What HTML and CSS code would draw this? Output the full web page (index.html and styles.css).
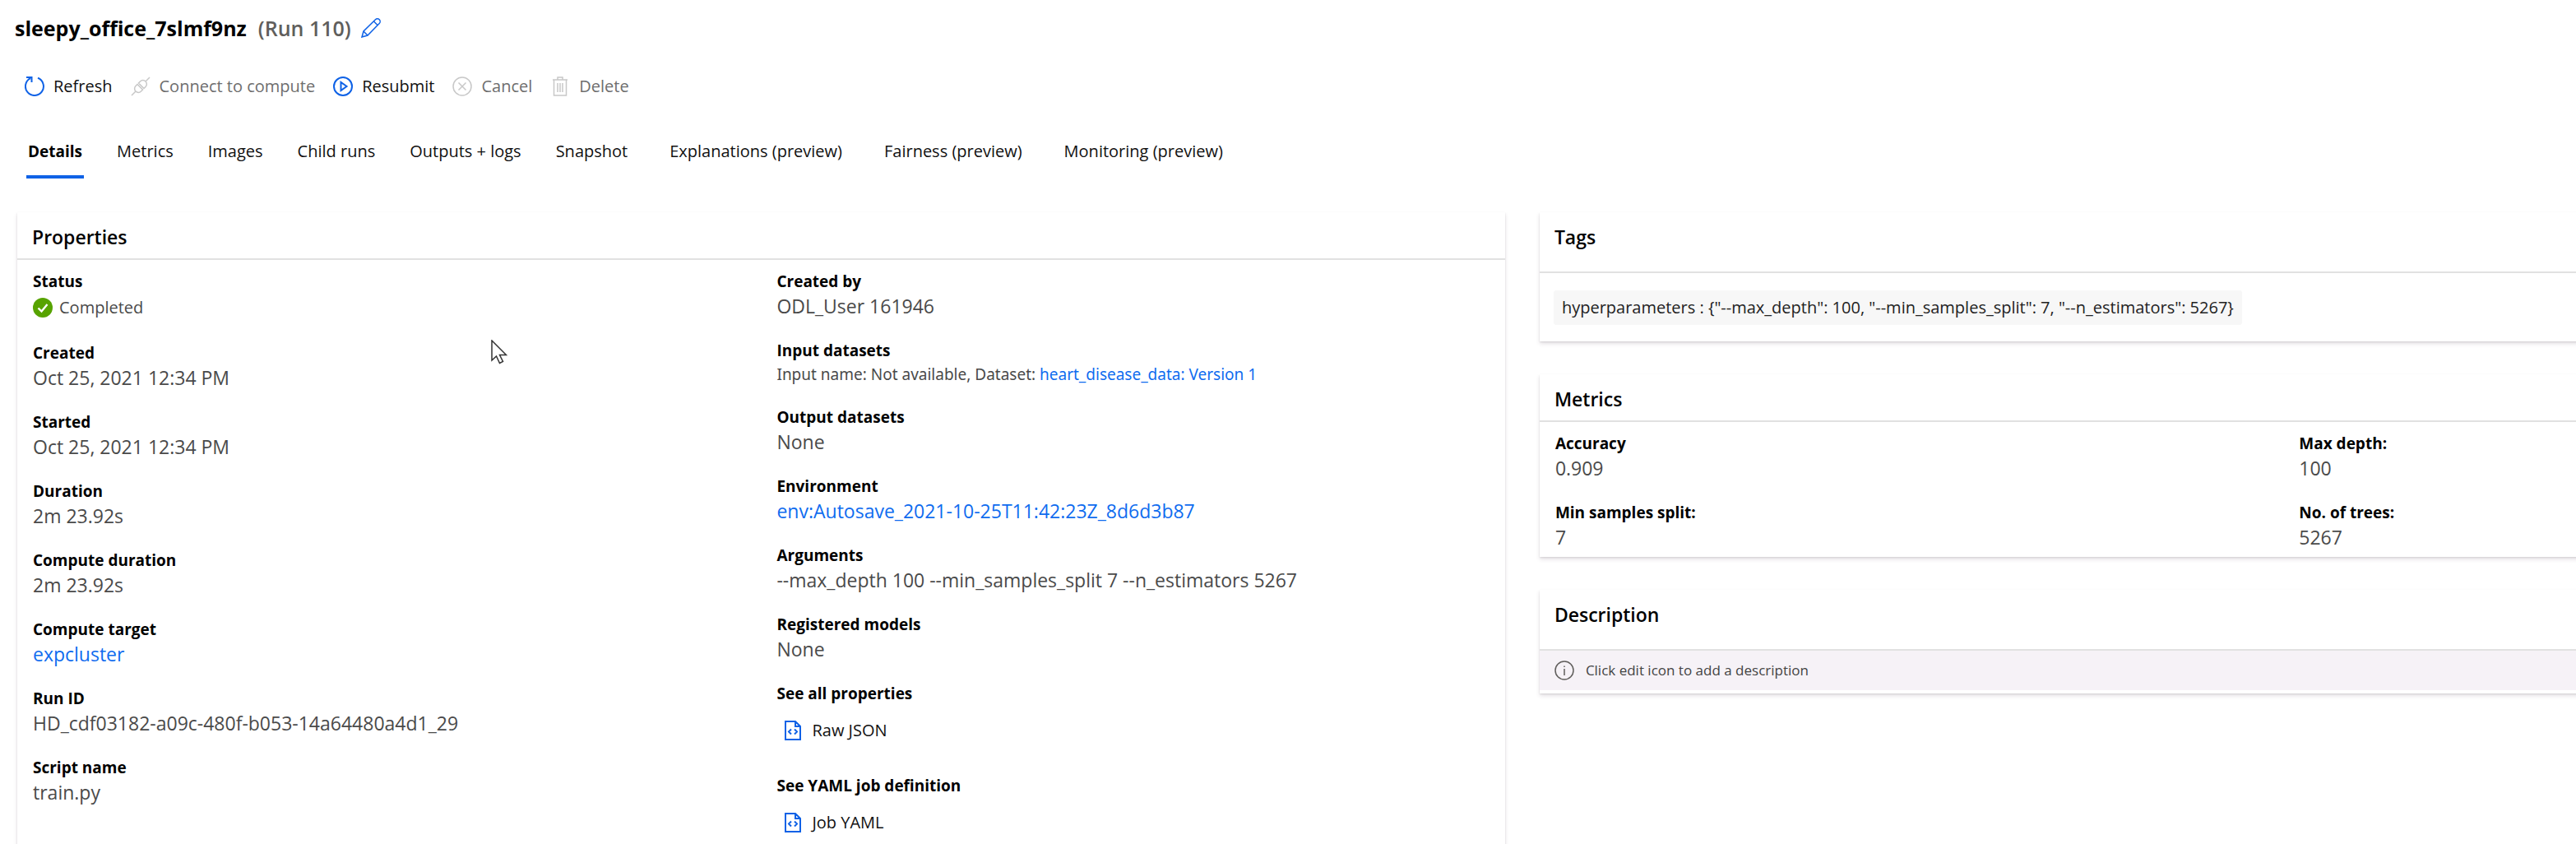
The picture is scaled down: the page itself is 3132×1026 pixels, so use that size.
FILE: index.html
```html
<!DOCTYPE html>
<html lang="en">
<head>
<meta charset="utf-8">
<title>sleepy_office_7slmf9nz (Run 110)</title>
<link rel="stylesheet" href="styles.css">
</head>
<body>
<div class="app">
  <header class="run-header">
    <h1 class="run-name">sleepy_office_7slmf9nz</h1>
    <span class="run-number">(Run 110)</span>
    <button class="icon-button" type="button" aria-label="Edit run name">
      <svg class="icon accent" viewBox="0 0 24 24"><path d="M1 23l2-7L17.500 1.800a3 3 0 0 1 4.700 4.700L8 21zM3 16l5 5M15.500 4l4.500 4.500M1.500 21.500l1.500 1.500"/></svg>
    </button>
  </header>

  <div class="toolbar" role="toolbar" aria-label="Run actions">
    <button class="command" type="button">
      <svg class="icon accent bold" viewBox="0 0 24 24"><path d="M16 1.800A11 11 0 1 1 7 2.200M2 1h6.500v6"/></svg>
      Refresh
    </button>
    <button class="command" type="button" disabled>
      <svg class="icon faint" viewBox="0 0 24 24"><path d="M1 23l5-5M18 6l5-5M6 18a4.500 4.500 0 0 1 0-6.500l2-2 6.500 6.500-2 2a4.500 4.500 0 0 1-6.500 0zM18 6a4.500 4.500 0 0 1 0 6.500l-2 2L9.500 8l2-2a4.500 4.500 0 0 1 6.500 0z"/></svg>
      Connect to compute
    </button>
    <button class="command" type="button">
      <svg class="icon accent bold" viewBox="0 0 24 24"><circle cx="12" cy="12" r="11"/><path d="M9.500 7v10l7-5z"/></svg>
      Resubmit
    </button>
    <button class="command" type="button" disabled>
      <svg class="icon faint" viewBox="0 0 24 24"><circle cx="12" cy="12" r="11"/><path d="M7.500 7.500l9 9M16.500 7.500l-9 9"/></svg>
      Cancel
    </button>
    <button class="command" type="button" disabled>
      <svg class="icon faint" viewBox="0 0 24 24"><path d="M3 4h18M9 4V1h6v3M4.500 4v19h15V4M9 8v11M12 8v11M15 8v11"/></svg>
      Delete
    </button>
  </div>

  <div class="tabs" role="tablist">
    <button class="tab selected" type="button" role="tab" aria-selected="true">Details</button>
    <button class="tab" type="button" role="tab">Metrics</button>
    <button class="tab" type="button" role="tab">Images</button>
    <button class="tab" type="button" role="tab">Child runs</button>
    <button class="tab" type="button" role="tab">Outputs + logs</button>
    <button class="tab" type="button" role="tab">Snapshot</button>
    <button class="tab preview" type="button" role="tab">Explanations (preview)</button>
    <button class="tab preview" type="button" role="tab">Fairness (preview)</button>
    <button class="tab preview" type="button" role="tab">Monitoring (preview)</button>
  </div>

  <main class="panels">
    <section class="card">
      <h2 class="card-title">Properties</h2>
      <div class="fields">
        <dl class="field-column">
          <div class="field"><dt>Status</dt><dd class="status"><svg class="status-icon" viewBox="0 0 24 24"><circle cx="12" cy="12" r="12" fill="#57a300"/><path d="M6.500 12.500l4 4 7-8.500" fill="none" stroke="#fff" stroke-width="2.400"/></svg>Completed</dd></div>
          <div class="field"><dt>Created</dt><dd>Oct 25, 2021 12:34 PM</dd></div>
          <div class="field"><dt>Started</dt><dd>Oct 25, 2021 12:34 PM</dd></div>
          <div class="field"><dt>Duration</dt><dd>2m 23.92s</dd></div>
          <div class="field"><dt>Compute duration</dt><dd>2m 23.92s</dd></div>
          <div class="field"><dt>Compute target</dt><dd><a href="#compute">expcluster</a></dd></div>
          <div class="field"><dt>Run ID</dt><dd>HD_cdf03182-a09c-480f-b053-14a64480a4d1_29</dd></div>
          <div class="field"><dt>Script name</dt><dd>train.py</dd></div>
        </dl>
        <dl class="field-column">
          <div class="field"><dt>Created by</dt><dd>ODL_User 161946</dd></div>
          <div class="field"><dt>Input datasets</dt><dd class="compact">Input name: Not available, Dataset: <a href="#dataset">heart_disease_data: Version 1</a></dd></div>
          <div class="field"><dt>Output datasets</dt><dd>None</dd></div>
          <div class="field"><dt>Environment</dt><dd><a href="#environment">env:Autosave_2021-10-25T11:42:23Z_8d6d3b87</a></dd></div>
          <div class="field"><dt>Arguments</dt><dd>--max_depth 100 --min_samples_split 7 --n_estimators 5267</dd></div>
          <div class="field"><dt>Registered models</dt><dd>None</dd></div>
          <div class="field"><dt>See all properties</dt><dd>
            <button class="command file-command" type="button"><svg class="icon accent bold" viewBox="0 0 24 24"><path d="M3 1h12l6 6v16H3zM15 1v6h6M10 10.500l-3 3 3 3M14 10.500l3 3-3 3"/></svg>Raw JSON</button></dd></div>
          <div class="field"><dt>See YAML job definition</dt><dd>
            <button class="command file-command" type="button"><svg class="icon accent bold" viewBox="0 0 24 24"><path d="M3 1h12l6 6v16H3zM15 1v6h6M10 10.500l-3 3 3 3M14 10.500l3 3-3 3"/></svg>Job YAML</button></dd></div>
        </dl>
      </div>
    </section>

    <div class="side">
      <section class="card">
        <h2 class="card-title tall">Tags</h2>
        <div class="tag-list"><span class="tag">hyperparameters : {"--max_depth": 100, "--min_samples_split": 7, "--n_estimators": 5267}</span></div>
      </section>
      <section class="card">
        <h2 class="card-title">Metrics</h2>
        <div class="fields">
          <dl class="field-column">
            <div class="field"><dt>Accuracy</dt><dd>0.909</dd></div>
            <div class="field"><dt>Min samples split:</dt><dd>7</dd></div>
          </dl>
          <dl class="field-column">
            <div class="field"><dt>Max depth:</dt><dd>100</dd></div>
            <div class="field"><dt>No. of trees:</dt><dd>5267</dd></div>
          </dl>
        </div>
      </section>
      <section class="card description">
        <h2 class="card-title tall">Description</h2>
        <p class="notice"><svg class="icon info" viewBox="0 0 24 24"><circle cx="12" cy="12" r="11"/><path d="M12 10v8M12 6.500v1.500"/></svg>Click edit icon to add a description</p>
      </section>
    </div>
  </main>

  <svg class="pointer" viewBox="0 0 20 30" aria-hidden="true"><path d="M1 1v24l5.500-5 4 8.500 4-2-4-8h8z"/></svg>
</div>
</body>
</html>
```
FILE: styles.css
```css
* {
  box-sizing: border-box;
}

body {
  margin: 0;
  background: #fff;
  color: #000;
  font: 400 20px/28px "Open Sans", "Noto Sans", sans-serif;
}

h1, h2, dl, dd, p {
  margin: 0;
}

button {
  margin: 0;
  padding: 0;
  border: 0;
  background: none;
  color: inherit;
  font: inherit;
}

a {
  color: #0f6cef;
  text-decoration: none;
}

.app {
  position: relative;
  height: 100vh;
  overflow: hidden;
}

/* Icons */
.icon {
  flex: none;
  width: 24px;
  height: 24px;
  fill: none;
  stroke: currentColor;
  stroke-width: 1.5;
}

.icon.bold {
  stroke-width: 2;
}

.icon.accent {
  color: #0f62e6;
}

.icon.faint {
  color: #c8c8c8;
}

/* Header */
.run-header {
  display: flex;
  align-items: center;
  padding: 16px 18px 0;
  font-size: 25px;
  line-height: 36px;
}

.run-name {
  font-size: 25px;
  font-weight: 700;
}

.run-number {
  margin: 0 12px 0 14px;
  color: #605e5c;
  font-weight: 600;
}

.icon-button {
  display: flex;
}

/* Commands */
.toolbar {
  display: flex;
  gap: 22px;
  padding: 39px 30px 0;
}

.command {
  display: flex;
  align-items: center;
  gap: 11px;
  color: #111;
}

.command:disabled {
  color: #6e6e6e;
}

.file-command {
  height: 59px;
  padding-left: 8px;
  font-size: 20px;
}

/* Tabs */
.tabs {
  display: flex;
  gap: 38px;
  padding: 51px 32px 41px;
}

.tab {
  padding: 0 2px 15px;
  border-bottom: 4px solid transparent;
  color: #111;
}

.tab.selected {
  border-bottom-color: #0f62e6;
  color: #000;
  font-size: 19px;
  font-weight: 700;
}

.tab.preview {
  margin-left: 9px;
}

/* Both columns are equal; the second one runs past the window's edge */
.panels {
  display: grid;
  grid-template-columns: repeat(2, minmax(0, 1fr));
  gap: 42px;
  width: 118%;
  padding: 0 15px 0 21px;
}

.side {
  display: flex;
  flex-direction: column;
  gap: 40px;
}

.card {
  background: #fff;
  box-shadow: 0 3px 5px rgba(60, 30, 60, 0.13), 0 1px 2px rgba(0, 0, 0, 0.1);
}

.card-title {
  padding: 14px 18px 10px;
  border-bottom: 2px solid #e1e1e1;
  font-size: 23px;
  font-weight: 600;
  line-height: 32px;
}

.card-title.tall {
  padding-bottom: 26px;
}

.fields {
  display: grid;
  grid-template-columns: 1fr 1fr;
  padding: 11px 0 8px;
}

.field-column {
  display: flex;
  flex-direction: column;
  gap: 23px;
  padding-left: 19px;
}

.field dt {
  font-size: 19px;
  font-weight: 700;
  line-height: 30px;
}

.field dd {
  color: #4a4a4a;
  font-size: 23px;
  line-height: 31px;
}

.field a {
  color: #0f6cef;
}

.field .status {
  display: flex;
  align-items: center;
  gap: 8px;
  font-size: 20px;
  line-height: 34px;
}

.status-icon {
  width: 24px;
  height: 24px;
}

.field .compact {
  font-family: "Noto Sans", sans-serif;
  font-size: 19px;
  line-height: 28px;
}

.tag-list {
  display: flex;
  padding: 21px 17px 20px;
}

.tag {
  padding: 0 10px;
  border-radius: 3px;
  background: #f7f7f7;
  color: #222;
  line-height: 42px;
}

.description {
  padding-bottom: 4px;
}

.notice {
  display: flex;
  align-items: center;
  gap: 14px;
  padding-left: 18px;
  background: #f6f2f7;
  color: #444;
  font-size: 17px;
  line-height: 48px;
}

.icon.info {
  color: #605e5c;
}

/* Mouse pointer lying over the page */
.pointer {
  position: absolute;
  top: 413px;
  left: 597px;
  width: 20px;
  height: 30px;
  fill: #fff;
  stroke: #333;
  stroke-width: 1.5;
}
```
